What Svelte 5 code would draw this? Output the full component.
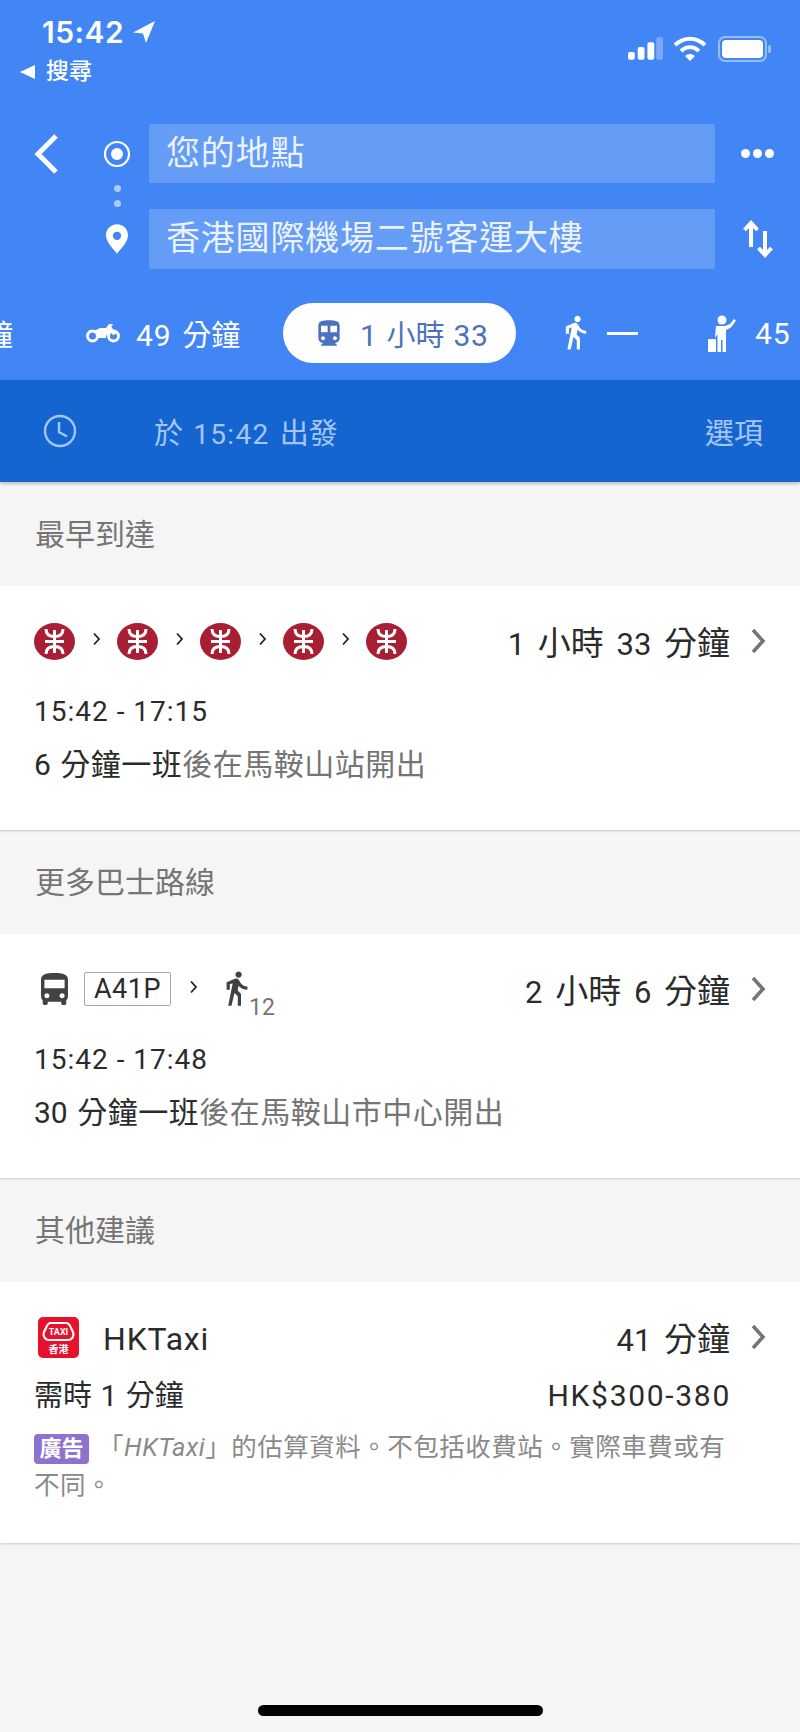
<script>
  const walk = "M13.5 5.5c1.1 0 2-.9 2-2s-.9-2-2-2-2 .9-2 2 .9 2 2 2zM9.8 8.9L7 23h2.1l1.8-8 2.1 2v6h2v-7.5l-2.1-2 .6-3C14.8 12 16.8 13 19 13v-2c-1.9 0-3.5-1-4.3-2.4l-1-1.6c-.4-.6-1-1-1.7-1-.3 0-.5.1-.8.1L6 8.3V13h2V9.6l1.8-.7";
  const bus = "M4 16c0 .88.39 1.67 1 2.22V20c0 .55.45 1 1 1h1c.55 0 1-.45 1-1v-1h8v1c0 .55.45 1 1 1h1c.55 0 1-.45 1-1v-1.78c.61-.55 1-1.34 1-2.22V6c0-3.5-3.58-4-8-4s-8 .5-8 4v10zm3.5 1c-.83 0-1.5-.67-1.5-1.5S6.67 14 7.5 14s1.5.67 1.5 1.5S8.33 17 7.5 17zm9 0c-.83 0-1.5-.67-1.5-1.5s.67-1.5 1.5-1.5 1.5.67 1.5 1.5-.67 1.5-1.5 1.5zm1.5-6H6V6h12v5z";
  const transit = "M12 2c-4.42 0-8 .5-8 4v9.5C4 17.43 5.57 19 7.5 19L6 20.5v.5h12v-.5L16.5 19c1.93 0 3.5-1.57 3.5-3.5V6c0-3.5-3.58-4-8-4zM7.5 17c-.83 0-1.5-.67-1.5-1.5S6.67 14 7.5 14s1.5.67 1.5 1.5S8.33 17 7.5 17zm3.5-6H6V6h5v5zm5.5 6c-.83 0-1.5-.67-1.5-1.5s.67-1.5 1.5-1.5 1.5.67 1.5 1.5-.67 1.5-1.5 1.5zm1.5-6h-5V6h5v5z";
  const mtrCount = [0, 1, 2, 3];
</script>

{#snippet chev(cls)}
  <svg class={cls} viewBox="0 0 16 28" aria-hidden="true"><polyline points="3,3 13,14 3,25" fill="none" stroke="currentColor" stroke-width="3.6" /></svg>
{/snippet}

{#snippet mtr()}
  <svg class="mtr" viewBox="0 0 41 37" aria-hidden="true">
    <ellipse cx="20.5" cy="18.5" rx="20.5" ry="18.5" fill="#a81e32" />
    <g fill="none" stroke="#fff" stroke-width="3">
      <path d="M12 6C12 11 15 13.500 20.500 13.500S29 11 29 6" />
      <path d="M12 31C12 26 15 23.500 20.500 23.500S29 26 29 31" />
      <path d="M20.500 7V30M11 18.500H30" />
    </g>
  </svg>
{/snippet}

<div class="page">
  <header class="head">
    <div class="status">
      <div class="status-left">
        <div class="time">15:42
          <svg class="loc" viewBox="0 0 24 24" aria-hidden="true"><path d="M23 1L1 12.500l10 1 3 9.500z" fill="#fff" /></svg>
        </div>
        <div class="back-app"><span class="tri"></span>搜尋</div>
      </div>
      <div class="status-right">
        <svg class="signal" viewBox="0 0 36 23" aria-hidden="true">
          <rect x="0" y="15" width="7" height="8" rx="2" fill="#fff" />
          <rect x="10" y="10" width="7" height="13" rx="2" fill="#fff" />
          <rect x="20" y="5" width="7" height="18" rx="2" fill="#fff" />
          <rect x="29" y="0" width="7" height="23" rx="2" fill="#fff" opacity=".3" />
        </svg>
        <svg class="wifi" viewBox="0 0 34 25" aria-hidden="true">
          <g fill="none" stroke="#fff" stroke-width="4">
            <path d="M2 9c9-8.500 21-8.500 30 0" />
            <path d="M8 15c5.500-5 12.500-5 18 0" />
          </g>
          <path d="M12 20c3-2.800 7-2.800 10 0l-5 5z" fill="#fff" />
        </svg>
        <svg class="batt" viewBox="0 0 54 26" aria-hidden="true">
          <rect x="1" y="1" width="47" height="24" rx="6" fill="none" stroke="#fff" stroke-opacity=".45" stroke-width="2" />
          <rect x="4" y="4" width="41" height="18" rx="4" fill="#fff" />
          <rect x="50" y="9" width="3" height="8" rx="1.500" fill="#fff" fill-opacity=".45" />
        </svg>
      </div>
    </div>

    <div class="route">
      <svg class="back" viewBox="0 0 28 44" aria-hidden="true"><polyline points="24,4 6,22 24,40" fill="none" stroke="#fff" stroke-width="5" /></svg>
      <svg class="origin" viewBox="0 0 28 28" aria-hidden="true">
        <circle cx="14" cy="14" r="12" fill="none" stroke="#fff" stroke-width="2.200" />
        <circle cx="14" cy="14" r="6" fill="#fff" />
      </svg>
      <div class="field">您的地點</div>
      <div class="more"><i></i><i></i><i></i></div>
      <div class="dots"><i></i><i></i></div>
      <svg class="pin" viewBox="0 0 24 32" aria-hidden="true">
        <path fill-rule="evenodd" d="M12 0C5 0 0 5.500 0 12c0 8 9 16 12 20 3-4 12-12 12-20C24 5.500 19 0 12 0zm0 8a4.500 4.500 0 1 1 0 9 4.500 4.500 0 0 1 0-9z" fill="#fff" />
      </svg>
      <div class="field">香港國際機場二號客運大樓</div>
      <svg class="swap" viewBox="0 0 30 38" aria-hidden="true">
        <g fill="none" stroke="#fff" stroke-width="4">
          <path d="M8 27V3M1.500 10L8 3l6.500 7" />
          <path d="M22 11v24M15.500 28l6.500 7 6.500-7" />
        </g>
      </svg>
    </div>

    <nav class="modes">
      <span class="mode clipped"><span class="z">鐘</span></span>
      <span class="mode moto">
        <svg class="ic-moto" viewBox="0 0 34 20" aria-hidden="true">
          <g fill="none" stroke="#fff" stroke-width="3">
            <circle cx="6.500" cy="13" r="5" />
            <circle cx="27.500" cy="13" r="5" />
          </g>
          <path d="M3 7h7l4-2h6l3-4h4l-1 2h-1l5 8-3 1-3-4-4 5v2h-8l-3-5-6-2z" fill="#fff" />
        </svg>
        <span>49 <span class="z">分鐘</span></span>
      </span>
      <span class="pill">
        <svg class="ic-train" viewBox="3 1 18 21" aria-hidden="true"><path d={transit} fill="#4a72bd" /></svg>
        <span class="pill-text">1 <span class="z">小時</span> 33</span>
      </span>
      <span class="mode walk">
        <svg class="ic-walk" viewBox="5 1 15 23" aria-hidden="true"><path d={walk} fill="#fff" /></svg>
        <span class="dash"></span>
      </span>
      <span class="mode hail">
        <svg class="ic-hail" viewBox="0 0 28 38" aria-hidden="true">
          <circle cx="14" cy="6" r="4.500" fill="#fff" />
          <path d="M8 12h9l5-2 4-5 2 1.500-5 7-5 2.500V38h-3.500V26h-1.500V38H9.500V20L7 24z" fill="#fff" />
          <rect x="0" y="25" width="8" height="13" rx="1" fill="#fff" />
        </svg>
        45
      </span>
    </nav>

    <div class="when">
      <svg class="clock" viewBox="0 0 34 34" aria-hidden="true">
        <circle cx="17" cy="17" r="15" fill="none" stroke="#a4c6f4" stroke-width="2.400" />
        <path d="M16 8v10l8 4.500" fill="none" stroke="#a4c6f4" stroke-width="2.400" />
      </svg>
      <span class="when-text"><span class="z">於</span> 15:42 <span class="z">出發</span></span>
      <span class="opts z">選項</span>
    </div>
  </header>

  <h2 class="label">最早到達</h2>
  <section class="card">
    <div class="top">
      <div class="steps">
        {@render mtr()}
        {#each mtrCount as n (n)}
          {@render chev("step-chev")}
          {@render mtr()}
        {/each}
      </div>
      <div class="dur">1 <span class="z">小時</span> 33 <span class="z">分鐘</span></div>
      {@render chev("go")}
    </div>
    <div class="line times">15:42 - 17:15</div>
    <div class="line">6 <span class="z">分鐘一班</span><span class="z muted">後在馬鞍山站開出</span></div>
  </section>

  <h2 class="label">更多巴士路線</h2>
  <section class="card">
    <div class="top">
      <div class="steps">
        <svg class="ic-bus" viewBox="4 2 16 19" aria-hidden="true"><path d={bus} fill="#424242" /></svg>
        <span class="badge">A41P</span>
        {@render chev("step-chev bus-chev")}
        <svg class="ic-walk2" viewBox="5 1 15 23" aria-hidden="true"><path d={walk} fill="#424242" /></svg>
        <sub class="mins">12</sub>
      </div>
      <div class="dur">2 <span class="z">小時</span> 6 <span class="z">分鐘</span></div>
      {@render chev("go")}
    </div>
    <div class="line times">15:42 - 17:48</div>
    <div class="line">30 <span class="z">分鐘一班</span><span class="z muted">後在馬鞍山市中心開出</span></div>
  </section>

  <h2 class="label">其他建議</h2>
  <section class="card taxi">
    <div class="top">
      <div class="steps">
        <svg class="taxi-logo" viewBox="0 0 41 41" aria-hidden="true">
          <rect width="41" height="41" rx="5" fill="#e8112d" />
          <path d="M13 6h15c3 0 4 2 5 5l2 4c1.500 4-1 8-5 8H11c-4 0-6.500-4-5-8l2-4c1-3 2-5 5-5z" fill="none" stroke="#fff" stroke-width="2.200" />
          <text x="20.500" y="18" text-anchor="middle" class="taxi-t">TAXI</text>
          <text x="20.500" y="36" text-anchor="middle" class="taxi-c">香港</text>
        </svg>
        <span class="brand">HKTaxi</span>
      </div>
      <div class="dur">41 <span class="z">分鐘</span></div>
      {@render chev("go")}
    </div>
    <div class="line taxi-line">
      <span><span class="z">需時</span> 1 <span class="z">分鐘</span></span>
      <span class="fare">HK$300-380</span>
    </div>
    <p class="note"><span class="ad">廣告</span><span class="gap"></span>「<em>HKTaxi</em>」的估算資料。不包括收費站。實際車費或有不同。</p>
  </section>

  <div class="home"></div>
</div>

<style>
  :global(body) { margin: 0; background: #f5f5f5; }
  .page {
    position: relative;
    width: 800px;
    height: 1732px;
    overflow: hidden;
    background: #f5f5f5;
    color: #2b2b2b;
    font-family: Roboto, "Noto Sans CJK TC", sans-serif;
  }
  .z { font-size: var(--z); letter-spacing: var(--zs, 0); }
  .head { background: #4285f4; color: #fff; }
  .status {
    height: 124px;
    box-sizing: border-box;
    display: flex;
    justify-content: space-between;
    padding: 14px 28px 0 20px;
  }
  .time {
    display: flex;
    align-items: center;
    gap: 8px;
    margin-left: 22px;
    font: 600 30px/36px Inter, sans-serif;
    letter-spacing: 0.5px;
    height: 36px;
  }
  .loc { width: 24px; height: 24px; }
  .back-app {
    display: flex;
    align-items: center;
    gap: 11px;
    font-size: 23px;
    line-height: 30px;
    margin-top: 7px;
    font-weight: 500;
  }
  .tri {
    width: 0;
    height: 0;
    border-style: solid;
    border-width: 7.500px 15px 7.500px 0;
    border-color: transparent #fff transparent transparent;
  }
  .status-right { display: flex; align-items: center; height: 25px; margin-top: 22px; gap: 10px; }
  .signal { width: 35px; height: 23px; }
  .wifi { width: 34px; height: 25px; }
  .batt { width: 54px; height: 26px; margin-left: 1px; }
  .route {
    display: grid;
    grid-template-columns: 85px 64px 566px 85px;
    grid-template-rows: 59px 26px 60px;
    align-items: center;
    justify-items: center;
    height: 156px;
  }
  .back { width: 28px; height: 44px; justify-self: start; margin-left: 32px; }
  .origin { width: 28px; height: 28px; grid-column: 2; }
  .field {
    grid-column: 3;
    justify-self: stretch;
    align-self: stretch;
    background: rgba(255, 255, 255, 0.19);
    border-radius: 2px;
    padding-left: 17px;
    font-size: 34px;
    letter-spacing: 0.800px;
    line-height: 58px;
    color: rgba(255, 255, 255, 0.88);
    white-space: nowrap;
  }
  .more { grid-column: 4; display: flex; gap: 3px; }
  .more i { width: 9px; height: 9px; border-radius: 50%; background: #fff; }
  .dots {
    grid-column: 2;
    grid-row: 2;
    display: flex;
    flex-direction: column;
    gap: 8px;
  }
  .dots i { width: 7px; height: 7px; border-radius: 50%; background: #a9cbfa; }
  .pin { width: 22px; height: 32px; grid-column: 2; }
  .swap { width: 30px; height: 38px; grid-column: 4; }
  .modes {
    --z: 29px;
    height: 100px;
    display: flex;
    align-items: center;
    font-size: 30px;
    letter-spacing: 1px;
    word-spacing: 2px;
    white-space: nowrap;
    box-sizing: border-box;
    padding-top: 6px;
  }
  .mode { display: flex; align-items: center; }
  .clipped { margin-left: -16px; width: 30px; }
  .moto { margin-left: 72px; gap: 16px; width: 197px; flex: none; }
  .ic-moto { width: 34px; height: 20px; flex: none; }
  .pill {
    display: flex;
    flex: none;
    align-items: center;
    gap: 19px;
    width: 233px;
    height: 60px;
    box-sizing: border-box;
    padding-left: 34px;
    background: #fff;
    color: #4a72bd;
    border-radius: 30px;
    margin-right: 48px;
  }
  .pill-text { word-spacing: 1px; letter-spacing: 0.600px; }
  .ic-train { width: 24px; height: 30px; }
  .ic-walk { width: 24px; height: 36px; }
  .walk { gap: 19px; width: 144px; flex: none; }
  .dash { width: 31px; height: 3px; background: #fff; }
  .hail { gap: 19px; flex: none; }
  .ic-hail { width: 28px; height: 38px; }
  .when {
    --z: 29px;
    display: flex;
    align-items: center;
    height: 102px;
    box-sizing: border-box;
    padding: 0 37px 0 43px;
    background: #1565d0;
    color: #a4c6f4;
    font-size: 28px;
    letter-spacing: 1.300px;
    word-spacing: 2px;
    box-shadow: 0 2px 3px rgba(0, 0, 0, 0.22);
    position: relative;
    white-space: nowrap;
  }
  .clock { width: 34px; height: 34px; margin-right: 77px; flex: none; }
  .when-text { flex: 1; }
  .label {
    margin: 0;
    height: 104px;
    line-height: 106px;
    box-sizing: border-box;
    padding-left: 35px;
    font-size: 30px;
    font-weight: 400;
    color: #757575;
  }
  .card {
    --z: 30px;
    --zs: 0.500px;
    background: #fff;
    height: 244px;
    box-sizing: border-box;
    padding: 35px 34px 0;
    box-shadow: 0 1px 2px rgba(0, 0, 0, 0.18);
  }
  .card.taxi { --z: 29px; --zs: 0; height: 261px; }
  .top { display: flex; align-items: center; height: 40px; }
  .steps { flex: 1; display: flex; align-items: center; }
  .mtr { width: 41px; height: 37px; }
  :global(.step-chev) { width: 9px; height: 14px; margin: -4px 16.500px 0; color: #222; }
  .dur { --z: 33px; --zs: 0; font-size: 31px; word-spacing: 5px; }
  :global(.go) { width: 16px; height: 28px; margin-left: 20px; color: #757575; }
  .line { font-size: 30px; word-spacing: 2px; line-height: 40px; margin-top: 13px; }
  .times { margin-top: 31px; word-spacing: 0; font-size: 28px; letter-spacing: 1px; }
  .muted { color: #757575; }
  .ic-bus { width: 27px; height: 32px; margin-left: 7px; }
  .badge {
    margin-left: 16px;
    border: 1px solid #a8a8a8;
    border-radius: 2px;
    width: 87px;
    height: 34px;
    box-sizing: border-box;
    line-height: 32px;
    text-align: center;
    font-size: 27px;
    letter-spacing: 0.500px;
  }
  :global(.bus-chev) { margin-left: 18px; margin-right: 27px; }
  .ic-walk2 { width: 24px; height: 38px; }
  .mins { align-self: flex-end; color: #757575; font-size: 23px; line-height: 23px; margin: 0 0 -11px 0; }
  .taxi-logo { width: 41px; height: 41px; margin-left: 4px; }
  .taxi-t { font: 700 9px Roboto, sans-serif; fill: #fff; }
  .taxi-c { font: 700 10px "Noto Sans CJK TC", sans-serif; fill: #fff; }
  .brand { margin-left: 24px; font-size: 32px; letter-spacing: 0.800px; line-height: 44px; padding-top: 4px; }
  .taxi-line { display: flex; justify-content: space-between; margin-top: 19px; margin-right: 35px; word-spacing: 1px; }
  .fare { letter-spacing: 1.700px; font-size: 30px; word-spacing: 0; }
  .note {
    margin: 12px 0 0;
    width: 700px;
    font-size: 25.500px;
    line-height: 38px;
    color: #8a8a8a;
    letter-spacing: 0.500px;
  }
  .note em { font-style: italic; }
  .ad {
    display: inline-block;
    width: 55px;
    height: 30px;
    line-height: 30px;
    text-align: center;
    background: #8d72cf;
    color: #fff;
    border-radius: 4px;
    font-size: 22px;
    letter-spacing: 0;
    font-weight: 700;
  }
  .gap { display: inline-block; width: 9px; }
  .home {
    position: absolute;
    left: 258px;
    top: 1705px;
    width: 285px;
    height: 11px;
    border-radius: 6px;
    background: #000;
  }
</style>
